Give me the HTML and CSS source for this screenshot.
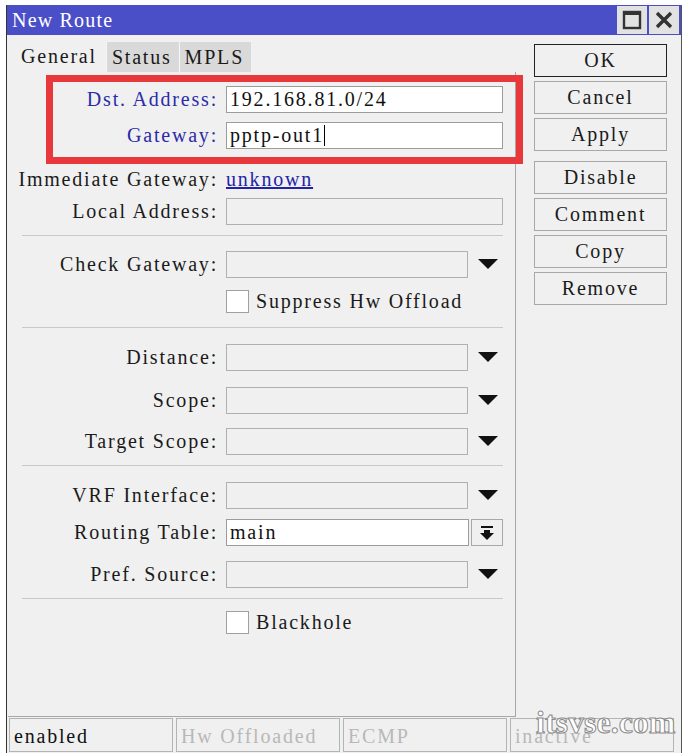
FILE: index.html
```html
<!DOCTYPE html>
<html lang="en">
<head>
  <meta charset="UTF-8">
  <meta name="viewport" content="width=device-width, initial-scale=1.0">
  <title>New Route</title>
  <link rel="stylesheet" href="styles.css">
</head>
<body>
  <div class="window">
    <div class="titlebar">
      <span class="title">New Route</span>
      <div class="win-buttons">
        <span class="win-btn">
          <svg width="20" height="20" viewBox="0 0 20 20"><rect x="2" y="2" width="16" height="16" fill="none" stroke="#333" stroke-width="2.4"/><rect x="2" y="2" width="16" height="3" fill="#333"/></svg>
        </span>
        <span class="win-btn">
          <svg width="20" height="20" viewBox="0 0 20 20"><path d="M3 3 L17 17 M17 3 L3 17" stroke="#333" stroke-width="3.4"/></svg>
        </span>
      </div>
    </div>

    <div class="main">
      <div class="left">
        <div class="tabs">
          <span class="tab active">General</span>
          <span class="tab">Status</span>
          <span class="tab">MPLS</span>
        </div>

        <div class="panel">
          <div class="row first">
            <label class="label key">Dst. Address:</label>
            <input class="field" type="text" value="192.168.81.0/24">
          </div>
          <div class="row">
            <label class="label key">Gateway:</label>
            <div class="field typing">pptp-out1<span class="caret"></span></div>
          </div>
          <div class="row gap17">
            <label class="label">Immediate Gateway:</label>
            <a class="link" href="#">unknown</a>
          </div>
          <div class="row gap5">
            <label class="label">Local Address:</label>
            <div class="field disabled"></div>
          </div>
          <div class="sep"></div>

          <div class="row gap15">
            <label class="label">Check Gateway:</label>
            <div class="field disabled short"></div>
            <span class="arrow"></span>
          </div>
          <div class="row gap10">
            <span class="label"></span>
            <span class="check"></span>
            <span class="check-text">Suppress Hw Offload</span>
          </div>
          <div class="sep sep12"></div>

          <div class="row gap16">
            <label class="label">Distance:</label>
            <div class="field disabled short"></div>
            <span class="arrow"></span>
          </div>
          <div class="row gap16">
            <label class="label">Scope:</label>
            <div class="field disabled short"></div>
            <span class="arrow"></span>
          </div>
          <div class="row gap14">
            <label class="label">Target Scope:</label>
            <div class="field disabled short"></div>
            <span class="arrow"></span>
          </div>
          <div class="sep"></div>

          <div class="row gap16">
            <label class="label">VRF Interface:</label>
            <div class="field disabled short"></div>
            <span class="arrow"></span>
          </div>
          <div class="row gap10">
            <label class="label">Routing Table:</label>
            <div class="field routing">main</div>
            <span class="down-btn">
              <svg width="16" height="16" viewBox="0 0 16 16"><rect x="2" y="1" width="12" height="2" fill="#111"/><rect x="5" y="5" width="6" height="4" fill="#111"/><path d="M1 8 L15 8 L8 15 Z" fill="#111"/></svg>
            </span>
          </div>
          <div class="row gap15">
            <label class="label">Pref. Source:</label>
            <div class="field disabled short"></div>
            <span class="arrow"></span>
          </div>
          <div class="sep"></div>

          <div class="row gap10">
            <span class="label"></span>
            <span class="check"></span>
            <span class="check-text">Blackhole</span>
          </div>
        </div>
      </div>

      <div class="actions">
        <button class="btn default">OK</button>
        <button class="btn">Cancel</button>
        <button class="btn">Apply</button>
        <button class="btn spaced">Disable</button>
        <button class="btn">Comment</button>
        <button class="btn">Copy</button>
        <button class="btn">Remove</button>
      </div>
    </div>

    <div class="statusbar">
      <span class="cell on">enabled</span>
      <span class="cell">Hw Offloaded</span>
      <span class="cell">ECMP</span>
      <span class="cell">inactive</span>
    </div>

    <div class="highlight"></div>
    <div class="watermark">itsvse.com</div>
  </div>
</body>
</html>
```

FILE: styles.css
```css
body {
  margin: 0;
  padding: 0;
  background: #fff;
  font-family: "Liberation Serif", serif;
  font-size: 20px;
  letter-spacing: 1.8px;
  color: #1a1a1a;
}

.window {
  position: relative;
  width: 674px;
  height: 748px;
  margin: 5px 0 0 6px;
  border-left: 1px solid #333;
  border-right: 1px solid #555;
  background: #f0f0f0;
  overflow: hidden;
}

.titlebar {
  height: 30px;
  background: #4a4fc8;
  display: flex;
  align-items: center;
  justify-content: space-between;
}

.title {
  color: #fff;
  padding-left: 5px;
  letter-spacing: 1.2px;
}

.win-buttons {
  display: flex;
  gap: 2px;
  margin-right: 2px;
  align-self: flex-start;
  margin-top: 1px;
}

.win-btn {
  width: 30px;
  height: 28px;
  background: #e2e2e2;
  display: flex;
  align-items: center;
  justify-content: center;
}

.main {
  display: flex;
  height: 682px;
}

.left {
  width: 509px;
  display: flex;
  flex-direction: column;
}

.tabs {
  display: flex;
  align-items: flex-end;
  height: 37px;
  padding-left: 1px;
}

.tab {
  height: 30px;
  line-height: 31px;
  padding: 0 7px 0 5px;
  background: #d9d9d9;
  border-left: 1px solid #f6f6f6;
}

.tab.active {
  height: 34px;
  line-height: 36px;
  padding: 0 9px 0 13px;
  background: #f0f0f0;
  border-left: none;
}

.panel {
  flex: 1;
  margin-left: 1px;
  border-right: 1px solid #a8a8a8;
  border-bottom: 1px solid #a8a8a8;
}

.row {
  display: flex;
  align-items: center;
  height: 27px;
  margin-top: 9px;
}

.row.first { margin-top: 14px; }
.row.gap5 { margin-top: 5px; }
.row.gap10 { margin-top: 10px; }
.row.gap14 { margin-top: 14px; }
.row.gap15 { margin-top: 15px; }
.row.gap16 { margin-top: 16px; }
.row.gap17 { margin-top: 17px; }

.label {
  width: 210px;
  margin-right: 8px;
  text-align: right;
  white-space: pre;
}

.label.key {
  color: #2b2ba8;
}

.field {
  box-sizing: border-box;
  width: 277px;
  height: 27px;
  border: 1px solid #9c9c9c;
  background: #fff;
  font-family: inherit;
  font-size: 20px;
  letter-spacing: 1.8px;
  color: #111;
  padding: 0 3px;
  line-height: 25px;
  outline: none;
  margin: 0;
}

.field.typing {
  display: flex;
  align-items: center;
}

.caret {
  display: inline-block;
  width: 1px;
  height: 21px;
  background: #000;
}

.field.disabled {
  background: #f0f0f0;
  border-color: #b0b0b0;
}

.field.short {
  width: 242px;
}

.field.routing {
  width: 243px;
}

.arrow {
  margin-left: 10px;
  width: 0;
  height: 0;
  border-left: 10px solid transparent;
  border-right: 10px solid transparent;
  border-top: 10px solid #111;
  margin-top: -2px;
}

.down-btn {
  box-sizing: border-box;
  width: 32px;
  height: 27px;
  margin-left: 2px;
  border: 1px solid #a8a8a8;
  display: flex;
  align-items: center;
  justify-content: center;
}

.link {
  color: #2323a8;
  text-decoration: underline;
}

.sep {
  height: 1px;
  background: #c8c8c8;
  width: 481px;
  margin: 10px 0 0 14px;
}

.sep.sep12 {
  margin-top: 12px;
}

.check {
  box-sizing: border-box;
  width: 23px;
  height: 23px;
  border: 1px solid #a0a0a0;
  background: #fff;
  margin-right: 7px;
}

.actions {
  display: flex;
  flex-direction: column;
  gap: 4px;
  margin: 9px 0 0 18px;
}

.btn {
  width: 133px;
  height: 33px;
  border: 1px solid #a8a8a8;
  background: #f0f0f0;
  font-family: inherit;
  font-size: 20px;
  letter-spacing: 1.8px;
  color: #1a1a1a;
  padding: 0;
}

.btn.default {
  border-color: #222;
}

.btn.spaced {
  margin-top: 6px;
}

.statusbar {
  display: flex;
  gap: 3px;
  padding: 1px 0 0 2px;
}

.cell {
  box-sizing: border-box;
  width: 164px;
  height: 34px;
  border: 1px solid #b4b4b4;
  padding-left: 4px;
  line-height: 34px;
  color: #b8b8b8;
  white-space: nowrap;
  overflow: hidden;
}

.cell.on {
  color: #111;
}

.highlight {
  position: absolute;
  left: 39px;
  top: 70px;
  width: 463px;
  height: 75px;
  border: 7px solid #e8383c;
}

.watermark {
  position: absolute;
  left: 529px;
  top: 699px;
  font-weight: bold;
  font-size: 32px;
  letter-spacing: 0;
  color: #fff;
  -webkit-text-stroke: 1px #8a8a8a;
}
```
